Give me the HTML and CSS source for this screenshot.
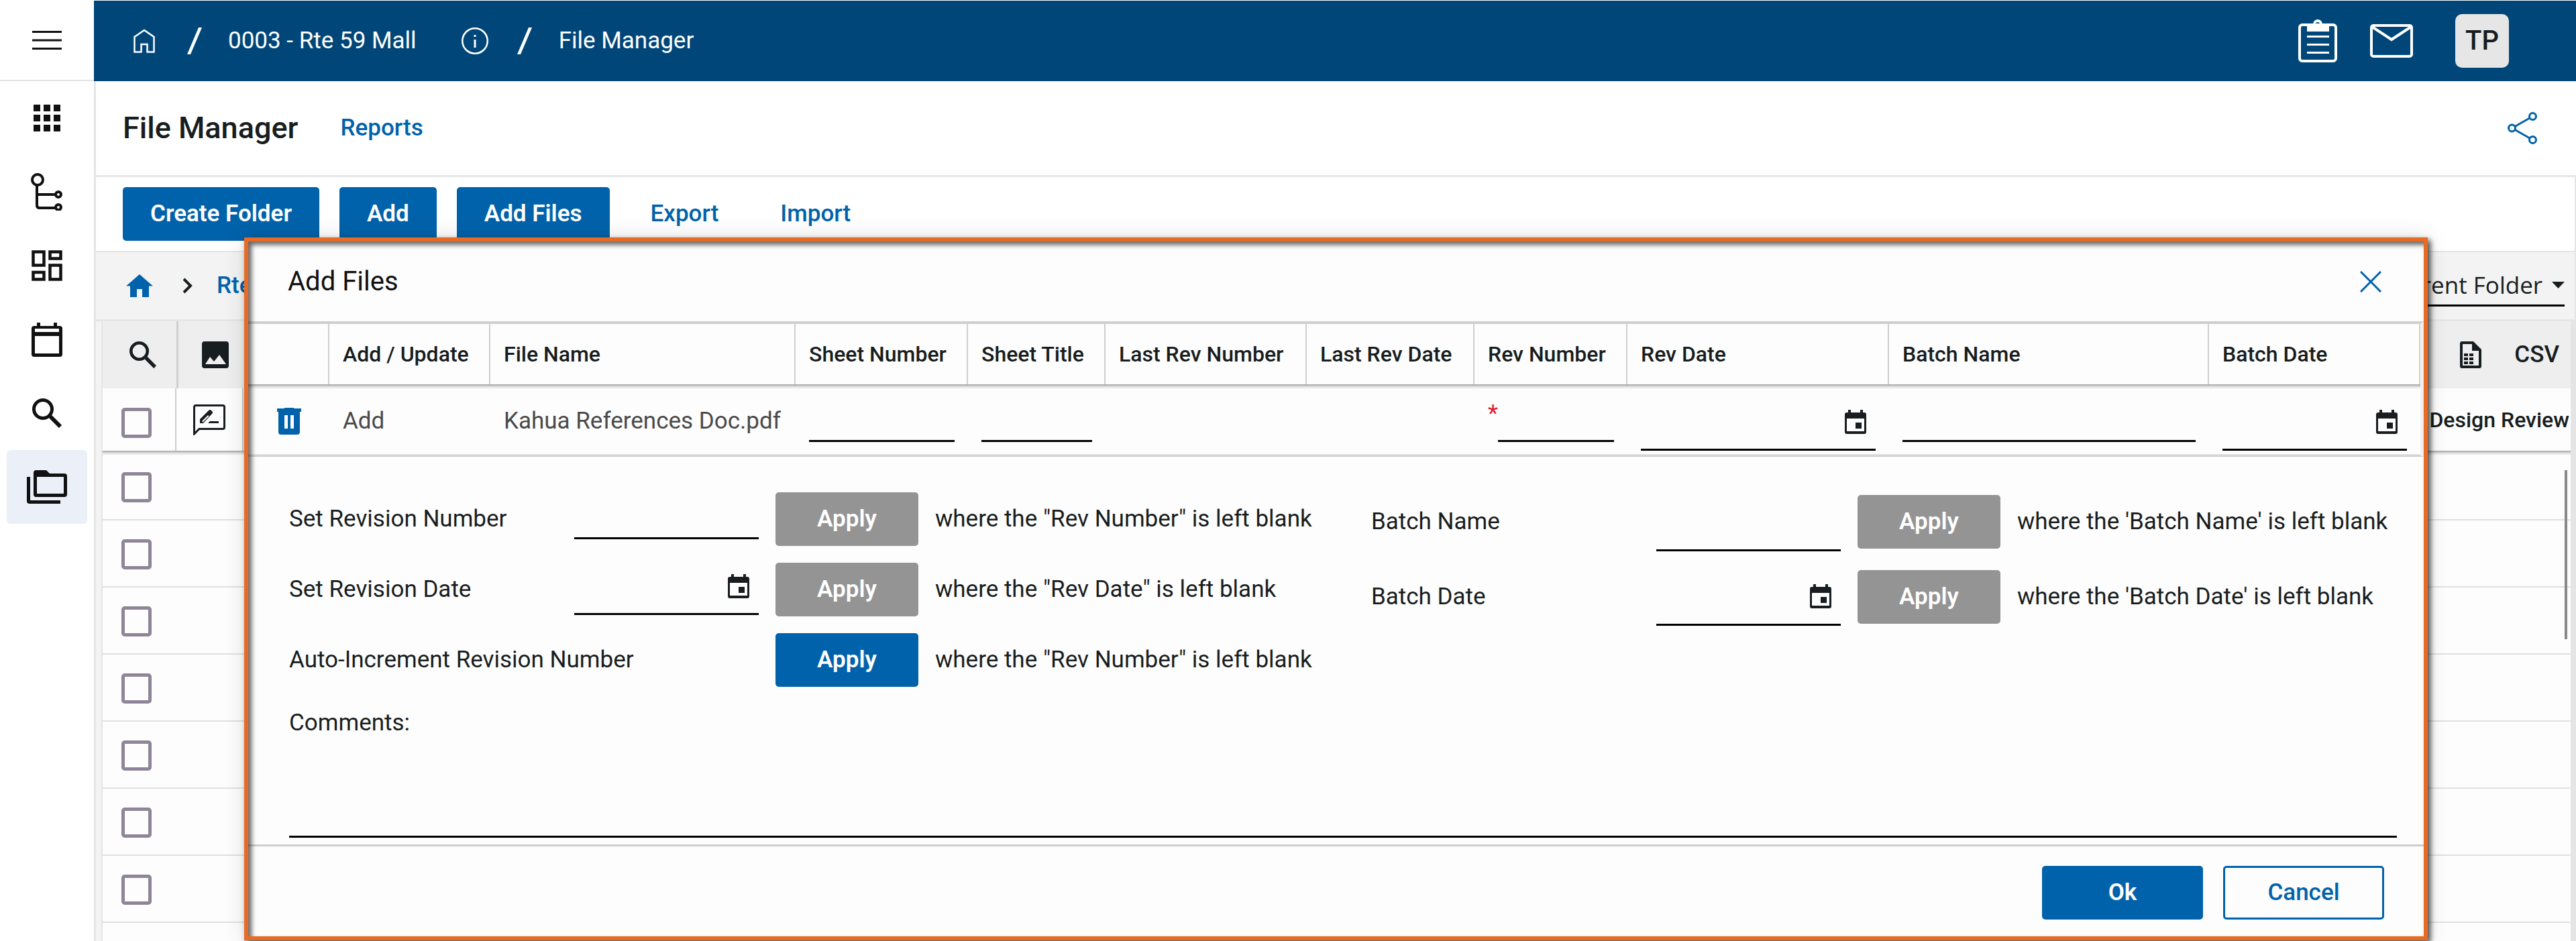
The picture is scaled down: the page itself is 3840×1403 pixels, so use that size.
FILE: index.html
```html
<!DOCTYPE html>
<html lang="en">
<head>
<meta charset="utf-8">
<title>File Manager</title>
<link rel="stylesheet" href="styles.css">
</head>
<body>
<svg class="sprite" aria-hidden="true">
  <symbol id="event" viewBox="0 0 32 36">
    <path d="M5 0h4v4h14V0h4v4h2a3 3 0 0 1 3 3v26a3 3 0 0 1-3 3H3a3 3 0 0 1-3-3V7a3 3 0 0 1 3-3h2zM3 13v19h26V13zM16 19h9v9h-9z" fill-rule="evenodd"/>
  </symbol>
  <symbol id="search" viewBox="0 0 44 44">
    <path d="M27 27l15 15" stroke="currentColor" stroke-width="6" fill="none"/>
    <circle cx="16" cy="16" r="13.5" stroke="currentColor" stroke-width="5" fill="none"/>
  </symbol>
  <symbol id="slash" viewBox="0 0 22 40">
    <path d="M17 0h5L5 40H0z"/>
  </symbol>
</svg>

<div class="app">
  <nav class="rail" aria-label="Main">
    <button class="rail-menu" aria-label="Menu">
      <svg width="44" height="28" viewBox="0 0 44 28"><path d="M0 0h44v3H0zM0 12.500h44v3H0zM0 25h44v3H0z"/></svg>
    </button>
    <a class="rail-item" href="#" aria-label="Apps">
      <svg width="40" height="40" viewBox="0 0 40 40"><path d="M0 0h10v10H0zM15 0h10v10H15zM30 0h10v10H30zM0 15h10v10H0zM15 15h10v10H15zM30 15h10v10H30zM0 30h10v10H0zM15 30h10v10H15zM30 30h10v10H30z"/></svg>
    </a>
    <a class="rail-item" href="#" aria-label="Hierarchy">
      <svg width="48" height="56" viewBox="0 0 48 56"><g fill="none" stroke="currentColor" stroke-width="4"><circle cx="10" cy="10" r="8"/><path d="M9 18v30q0 4 4 4h24M9 32h28"/><circle cx="41" cy="32" r="4"/><circle cx="41" cy="51" r="4"/></g></svg>
    </a>
    <a class="rail-item" href="#" aria-label="Dashboard">
      <svg width="46" height="46" viewBox="0 0 46 46"><g fill="none" stroke="currentColor" stroke-width="4.500"><path d="M2.500 2.500h16v20h-16zM27.500 2.500h16v10h-16zM27.500 22.500h16v21h-16zM2.500 33h16v10.500h-16z"/></g></svg>
    </a>
    <a class="rail-item" href="#" aria-label="Calendar">
      <svg width="46" height="51" viewBox="0 0 46 51"><path d="M8 0h5v5h20V0h5v5h4a4 4 0 0 1 4 4v38a4 4 0 0 1-4 4H4a4 4 0 0 1-4-4V9a4 4 0 0 1 4-4h4zM5 9v5h36V9zM5 20v26h36V20z" fill-rule="evenodd"/></svg>
    </a>
    <a class="rail-item" href="#" aria-label="Search">
      <svg width="44" height="44"><use href="#search"/></svg>
    </a>
    <a class="rail-item active" href="#" aria-label="File Manager">
      <svg width="60" height="50" viewBox="0 0 60 50"><path d="M14 0h15l5 5h22a4 4 0 0 1 4 4v27a4 4 0 0 1-4 4H14a4 4 0 0 1-4-4V4a4 4 0 0 1 4-4zM15 10v25h40V10zM0 10h5v35h45v5H4a4 4 0 0 1-4-4z" fill-rule="evenodd"/></svg>
    </a>
  </nav>

  <div class="main">
    <header class="topbar">
      <a class="top-home" href="#" aria-label="Home"><svg width="32" height="36" viewBox="0 0 32 36"><path d="M1.500 12L16 2l14.500 10v22.500H20.500V23h-9v11.500h-10z" fill="none" stroke="currentColor" stroke-width="2.500"/></svg></a>
      <svg class="slash" width="22" height="40"><use href="#slash"/></svg>
      <a class="top-text" href="#">0003 - Rte 59 Mall</a>
      <button class="top-info" aria-label="Info"><svg width="40" height="40" viewBox="0 0 40 40"><circle cx="20" cy="20" r="18.750" fill="none" stroke="currentColor" stroke-width="2.500"/><path d="M18.500 11h3v3h-3zM18.500 18h3v12h-3z"/></svg></button>
      <svg class="slash" width="22" height="40"><use href="#slash"/></svg>
      <span class="top-text">File Manager</span>
      <div class="top-actions">
        <button aria-label="Tasks"><svg width="58" height="64" viewBox="0 0 58 64"><rect x="2" y="8" width="54" height="54" rx="4" fill="none" stroke="currentColor" stroke-width="4"/><path d="M13 7h9a7 7 0 0 1 14 0h10v11H13zM29 4a3 3 0 1 0 0 6a3 3 0 1 0 0-6z" fill-rule="evenodd"/><path d="M13 24h33v3H13zM13 36h33v3H13zM13 48h33v3H13z"/></svg></button>
        <button aria-label="Messages"><svg width="64" height="50" viewBox="0 0 64 50"><rect x="2" y="2" width="60" height="46" rx="3" fill="none" stroke="currentColor" stroke-width="4"/><path d="M3 4l29 19L61 4" fill="none" stroke="currentColor" stroke-width="4"/></svg></button>
        <button class="avatar">TP</button>
      </div>
    </header>

    <div class="titlebar">
      <h1>File Manager</h1>
      <a href="#">Reports</a>
      <button class="share" aria-label="Share"><svg width="44" height="48" viewBox="0 0 44 48"><g fill="none" stroke="currentColor" stroke-width="3"><circle cx="6.500" cy="24" r="5"/><circle cx="37.500" cy="6.500" r="5"/><circle cx="37.500" cy="41.500" r="5"/><path d="M11 21.500L33 9M11 26.500L33 39"/></g></svg></button>
    </div>

    <div class="toolbar">
      <button class="btn">Create Folder</button>
      <button class="btn">Add</button>
      <button class="btn">Add Files</button>
      <button class="btn btn-text">Export</button>
      <button class="btn btn-text">Import</button>
    </div>

    <div class="crumbs">
      <a href="#" aria-label="Root folder"><svg width="40" height="34" viewBox="0 0 40 34"><path d="M20 0l20 17.500h-6V34H24V22h-8v12H6V17.500H0z"/></svg></a>
      <svg class="chevron" width="15" height="24" viewBox="0 0 15 24"><path d="M2 2l10 10L2 22" fill="none" stroke="currentColor" stroke-width="4"/></svg>
      <a class="crumb" href="#">Rte</a>
      <div class="scope">
        <select aria-label="Search scope"><option>Current Folder</option></select>
        <svg width="19" height="10" viewBox="0 0 19 10"><path d="M0 0h19L9.500 10z"/></svg>
      </div>
    </div>

    <div class="files">
      <div class="files-tools">
        <button class="tool" aria-label="Search"><svg width="40" height="40"><use href="#search"/></svg></button>
        <button class="tool" aria-label="Thumbnails"><svg width="40" height="40" viewBox="0 0 40 40"><path d="M4 0h32a4 4 0 0 1 4 4v32a4 4 0 0 1-4 4H4a4 4 0 0 1-4-4V4a4 4 0 0 1 4-4zM5 34h31L26 20l-8 10-6-7z" fill-rule="evenodd"/></svg></button>
        <button class="csv"><svg width="32" height="40" viewBox="0 0 32 40"><path d="M3 0h17l12 12v25a3 3 0 0 1-3 3H3a3 3 0 0 1-3-3V3a3 3 0 0 1 3-3zM4 4v32h24V14H18V4z" fill-rule="evenodd"/><path d="M6 18h6v4H6zM14 18h6v4h-6zM6 24h6v4H6zM14 24h6v4h-6zM6 30h6v4H6zM14 30h6v4h-6z"/></svg>CSV</button>
      </div>
      <table class="file-table">
        <thead>
          <tr>
            <th class="c-check"><input type="checkbox" aria-label="Select all"></th>
            <th class="c-icon"><svg width="48" height="46" viewBox="0 0 48 46"><path d="M1.500 44V4q0-2.500 2.500-2.500h40q2.500 0 2.500 2.500v30q0 2.500-2.500 2.500H9z" fill="none" stroke="currentColor" stroke-width="3"/><path d="M10 28v-6L23 9q2-2 4 0l1 1q2 2 0 4L15 28zM13 25l9-9 1.500 1.500L14.500 26.500z" fill-rule="evenodd"/><path d="M22 28l3-3h13v3z"/></svg></th>
            <th class="c-name">Design Review</th>
          </tr>
        </thead>
        <tbody>
          <tr><td><input type="checkbox" aria-label="Select row"></td><td></td><td></td></tr>
          <tr><td><input type="checkbox" aria-label="Select row"></td><td></td><td></td></tr>
          <tr><td><input type="checkbox" aria-label="Select row"></td><td></td><td></td></tr>
          <tr><td><input type="checkbox" aria-label="Select row"></td><td></td><td></td></tr>
          <tr><td><input type="checkbox" aria-label="Select row"></td><td></td><td></td></tr>
          <tr><td><input type="checkbox" aria-label="Select row"></td><td></td><td></td></tr>
          <tr><td><input type="checkbox" aria-label="Select row"></td><td></td><td></td></tr>
          <tr><td><input type="checkbox" aria-label="Select row"></td><td></td><td></td></tr>
        </tbody>
      </table>
      <div class="scroll-thumb"></div>
    </div>
  </div>
</div>

<section class="dialog" role="dialog" aria-labelledby="dialog-title">
  <header class="dialog-head">
    <h2 id="dialog-title">Add Files</h2>
    <button class="close" aria-label="Close"><svg width="32" height="32" viewBox="0 0 32 32"><path d="M1 1l30 30M31 1L1 31" fill="none" stroke="currentColor" stroke-width="3"/></svg></button>
  </header>

  <table class="upload-table">
    <colgroup>
      <col class="w-del"><col class="w-action"><col class="w-file"><col class="w-sheet"><col class="w-title"><col class="w-lastrev"><col class="w-lastdate"><col class="w-rev"><col class="w-revdate"><col><col class="w-batchdate">
    </colgroup>
    <thead>
      <tr>
        <th></th><th>Add / Update</th><th>File Name</th><th>Sheet Number</th><th>Sheet Title</th><th>Last Rev Number</th><th>Last Rev Date</th><th>Rev Number</th><th>Rev Date</th><th>Batch Name</th><th>Batch Date</th>
      </tr>
    </thead>
    <tbody>
      <tr>
        <td class="del"><button aria-label="Remove file"><svg width="36" height="40" viewBox="0 0 36 40"><path d="M0 1h11V0h14v1h11v5h-2v30a4 4 0 0 1-4 4H6a4 4 0 0 1-4-4V6H0zM11 11v20h5V11zM20 11v20h5V11z" fill-rule="evenodd"/></svg></button></td>
        <td>Add</td>
        <td>Kahua References Doc.pdf</td>
        <td><input class="line-input" type="text" aria-label="Sheet Number"></td>
        <td><input class="line-input" type="text" aria-label="Sheet Title"></td>
        <td></td>
        <td></td>
        <td><div class="required"><span>*</span><input class="line-input" type="text" aria-label="Rev Number" required></div></td>
        <td><div class="date-field"><input type="text" aria-label="Rev Date"><svg width="32" height="36"><use href="#event"/></svg></div></td>
        <td><input class="line-input" type="text" aria-label="Batch Name"></td>
        <td><div class="date-field"><input type="text" aria-label="Batch Date"><svg width="32" height="36"><use href="#event"/></svg></div></td>
      </tr>
    </tbody>
  </table>

  <form class="dialog-form">
    <div class="apply-columns">
      <div class="apply-grid">
        <label for="rev-number">Set Revision Number</label>
        <input class="line-input" id="rev-number" type="text">
        <button type="button" class="btn btn-off">Apply</button>
        <span>where the "Rev Number" is left blank</span>
        <label for="rev-date">Set Revision Date</label>
        <div class="date-field"><input id="rev-date" type="text"><svg width="32" height="36"><use href="#event"/></svg></div>
        <button type="button" class="btn btn-off">Apply</button>
        <span>where the "Rev Date" is left blank</span>
        <span class="wide">Auto-Increment Revision Number</span>
        <button type="button" class="btn">Apply</button>
        <span>where the "Rev Number" is left blank</span>
      </div>
      <div class="apply-grid batch">
        <label for="batch-name">Batch Name</label>
        <input class="line-input" id="batch-name" type="text">
        <button type="button" class="btn btn-off">Apply</button>
        <span>where the 'Batch Name' is left blank</span>
        <label for="batch-date">Batch Date</label>
        <div class="date-field"><input id="batch-date" type="text"><svg width="32" height="36"><use href="#event"/></svg></div>
        <button type="button" class="btn btn-off">Apply</button>
        <span>where the 'Batch Date' is left blank</span>
      </div>
    </div>
    <label class="comments-label" for="comments">Comments:</label>
    <textarea id="comments"></textarea>
  </form>

  <footer class="dialog-foot">
    <button class="btn">Ok</button>
    <button class="btn btn-outline">Cancel</button>
  </footer>
</section>
</body>
</html>
```
FILE: styles.css
```css
:root {
  --blue: #0062aa;
  --navy: #004679;
  --ink: #181d20;
  --line: #e5e5e5;
  --rule: #cfcfcf;
}

* { box-sizing: border-box; }

body {
  margin: 0;
  position: relative;
  font-family: Roboto, "Liberation Sans", sans-serif;
  font-size: 35px;
  line-height: 40px;
  color: var(--ink);
  background: #fff;
}

button, input, select, textarea { font: inherit; color: inherit; margin: 0; }

button {
  padding: 0;
  border: 0;
  background: none;
  display: flex;
  align-items: center;
  justify-content: center;
}

a { color: var(--blue); text-decoration: none; font-weight: 500; }
svg { fill: currentColor; flex: none; display: block; }
h1, h2 { margin: 0; }
.sprite { position: absolute; width: 0; height: 0; }

.app { display: flex; height: 100vh; min-height: 1400px; overflow: hidden; }

/* Left rail */
.rail {
  width: 140px;
  flex: none;
  display: flex;
  flex-direction: column;
  align-items: center;
  color: #111;
}
.rail-menu { width: 100%; height: 121px; border-bottom: 2px solid var(--line); }
.rail-item {
  width: 120px;
  height: 110px;
  color: inherit;
  display: flex;
  align-items: center;
  justify-content: center;
  border-radius: 6px;
}
.rail-item.active { background: #eaeff8; }

.main { flex: 1; min-width: 0; display: flex; flex-direction: column; }

/* Top bar */
.topbar {
  height: 120px;
  margin-top: 1px;
  flex: none;
  padding: 0 100px 0 59px;
  display: flex;
  align-items: center;
  background: var(--navy);
  color: #fff;
}
.topbar a, .topbar button { color: inherit; }
.top-text { font-weight: 400; }
.topbar .slash { margin: 0 39px 0 48px; }
.top-info { margin-left: 67px; }
.topbar .top-info + .slash { margin: 0 40px 0 43px; }
.top-actions { margin-left: auto; display: flex; align-items: center; gap: 49px; }
.topbar .avatar {
  width: 80px;
  height: 80px;
  margin-left: 14px;
  border-radius: 10px;
  background: #e6e6e6;
  color: var(--ink);
  font-size: 40px;
  font-weight: 500;
}

.titlebar, .toolbar, .crumbs, .files { border-left: 3px solid var(--line); }

.titlebar {
  height: 143px;
  flex: none;
  padding: 0 58px 0 40px;
  display: flex;
  align-items: center;
  gap: 63px;
  border-bottom: 3px solid var(--line);
}
.titlebar h1 { font-size: 45px; font-weight: 500; }
.share { margin-left: auto; color: var(--blue); }

.toolbar {
  height: 112px;
  flex: none;
  padding: 0 40px;
  display: flex;
  align-items: center;
  gap: 30px;
  border-right: 2px solid var(--line);
  border-bottom: 2px solid var(--line);
}

.btn {
  height: 80px;
  padding: 0 41px;
  border-radius: 5px;
  background: var(--blue);
  color: #fff;
  font-weight: 600;
}
.btn-text { padding: 0 31px; background: none; color: var(--blue); font-weight: 500; }
.btn-off { background: #949494; }
.btn-outline { border: 3px solid var(--blue); background: none; color: var(--blue); font-weight: 500; }

.crumbs {
  height: 103px;
  flex: none;
  padding: 0 15px 0 45px;
  display: flex;
  align-items: center;
  background: #f3f3f3;
  border-right: 2px solid var(--line);
  border-bottom: 3px solid var(--line);
}
.chevron { margin: 0 36px 0 44px; }
.scope {
  height: 60px;
  margin-top: 1px;
  margin-left: auto;
  display: flex;
  align-items: center;
  gap: 13px;
  border-bottom: 3px solid #000;
}
.scope select {
  appearance: none;
  padding: 0;
  border: 0;
  background: none;
  font-family: "Open Sans", "Noto Sans", sans-serif;
}

/* File list behind the dialog */
.files {
  position: relative;
  flex: 1;
  min-height: 0;
  padding-left: 8px;
  background: #f3f3f3;
  border-right: 8px solid var(--line);
}
.files-tools {
  height: 100px;
  display: flex;
  background: #eee;
  border-left: 2px solid var(--line);
}
.tool { width: 110px; }
.tool:first-child { width: 113px; padding-left: 10px; border-right: 3px solid var(--rule); }
.csv { margin-left: auto; padding-right: 17px; gap: 49px; font-weight: 500; }
.file-table {
  width: 100%;
  table-layout: fixed;
  border-spacing: 0;
  background: #fdfdfd;
  border-left: 2px solid var(--line);
}
.file-table th {
  height: 93px;
  padding: 0;
  border-right: 2px solid var(--rule);
  font-size: 32px;
  font-weight: 500;
}
.file-table .c-check { width: 110px; padding: 10px 0 0 28px; text-align: left; }
.file-table .c-icon { width: 100px; padding-left: 25px; }
.file-table .c-name { padding-right: 2px; text-align: right; border: 0; }
.file-table td { height: 100px; padding: 3px 0 0 28px; border-bottom: 2px solid #e0e0e0; }
.file-table tbody tr:first-child td { height: 104px; padding-top: 6px; }

/* Shadow that the header row drops on the first body row */
tbody tr:first-child td {
  background: linear-gradient(#a0a0a0, #d8d8d8 3px, rgba(253, 253, 253, 0) 7px) no-repeat;
}

input[type="checkbox"] {
  appearance: none;
  display: block;
  width: 45px;
  height: 45px;
  border: 5px solid #8e8698;
  border-radius: 5px;
}
.scroll-thumb {
  position: absolute;
  top: 222px;
  right: 5px;
  width: 4px;
  height: 252px;
  background: #888;
}

/* Add Files dialog */
.dialog {
  position: absolute;
  top: 354px;
  left: 364px;
  right: 221px;
  border: 6px solid #e96a23;
  background: #fdfdfd;
  box-shadow: 4px 4px 8px rgba(0, 0, 0, .7), 0 0 30px rgba(0, 0, 0, .12);
}
/* Frame shadow, cast over the dialog's own rules */
.dialog::after {
  content: "";
  position: absolute;
  inset: 0;
  pointer-events: none;
  box-shadow: inset 5px 5px 7px rgba(0, 0, 0, .6);
}
.dialog-head {
  height: 119px;
  padding: 0 63px 0 59px;
  display: flex;
  align-items: center;
  justify-content: space-between;
}
.dialog-head h2 { font-size: 40px; font-weight: 400; color: #111; }
.close { color: var(--blue); }

.upload-table {
  width: 100%;
  table-layout: fixed;
  border-spacing: 0;
  border-top: 4px solid var(--rule);
  border-right: 5px solid #f3f3f3;
  border-bottom: 2px solid var(--rule);
}
.w-del { width: 121px; }
.w-action { width: 240px; }
.w-file { width: 455px; }
.w-sheet { width: 257px; }
.w-title { width: 205px; }
.w-lastrev { width: 300px; }
.w-lastdate { width: 250px; }
.w-rev { width: 228px; }
.w-revdate { width: 390px; }
.w-batchdate { width: 315px; }
.upload-table th {
  height: 90px;
  padding: 0 0 0 20px;
  border-right: 2px solid var(--rule);
  font-size: 32px;
  font-weight: 500;
  text-align: left;
  white-space: nowrap;
}
.upload-table td {
  height: 106px;
  padding: 6px 20px 0;
  border-bottom: 2px solid #e0e0e0;
  color: #4a4a4a;
  white-space: nowrap;
}
.upload-table .del { padding-left: 43px; color: var(--blue); }
.upload-table .del button { color: inherit; }
.upload-table .line-input { display: block; margin-top: 2px; }

.line-input {
  width: 100%;
  height: 60px;
  padding: 0 4px;
  border: 0;
  border-bottom: 3px solid #000;
  border-radius: 0;
  background: none;
}
.required { display: flex; }
.required span { width: 15px; flex: none; color: #de1c2f; }
.date-field {
  height: 76px;
  display: flex;
  align-items: center;
  padding: 0 14px 8px 4px;
  border-bottom: 3px solid #000;
  color: var(--ink);
}
.date-field input { flex: 1; min-width: 0; height: 60px; padding: 0; border: 0; background: none; }
.upload-table .date-field { margin-top: 12px; }

.dialog-form { padding: 53px 40px 10px 61px; display: flex; flex-direction: column; }
.apply-columns { display: grid; grid-template-columns: 1fr 1fr; gap: 84px; }
.apply-grid {
  display: grid;
  grid-template-columns: 400px 275px 213px auto;
  column-gap: 25px;
  row-gap: 25px;
  align-items: center;
  align-content: start;
  white-space: nowrap;
}
.batch .line-input { height: 88px; }
.batch .date-field { height: 86px; padding-bottom: 0; }
.wide { grid-column: span 2; }
.comments-label { margin-top: 34px; }
textarea {
  height: 151px;
  padding: 4px;
  resize: none;
  border: 0;
  border-bottom: 3px solid #000;
  background: none;
}

.dialog-foot {
  padding: 29px 59px 25px;
  display: flex;
  justify-content: flex-end;
  gap: 30px;
  border-top: 3px solid var(--rule);
}
.dialog-foot .btn { width: 240px; }
```
